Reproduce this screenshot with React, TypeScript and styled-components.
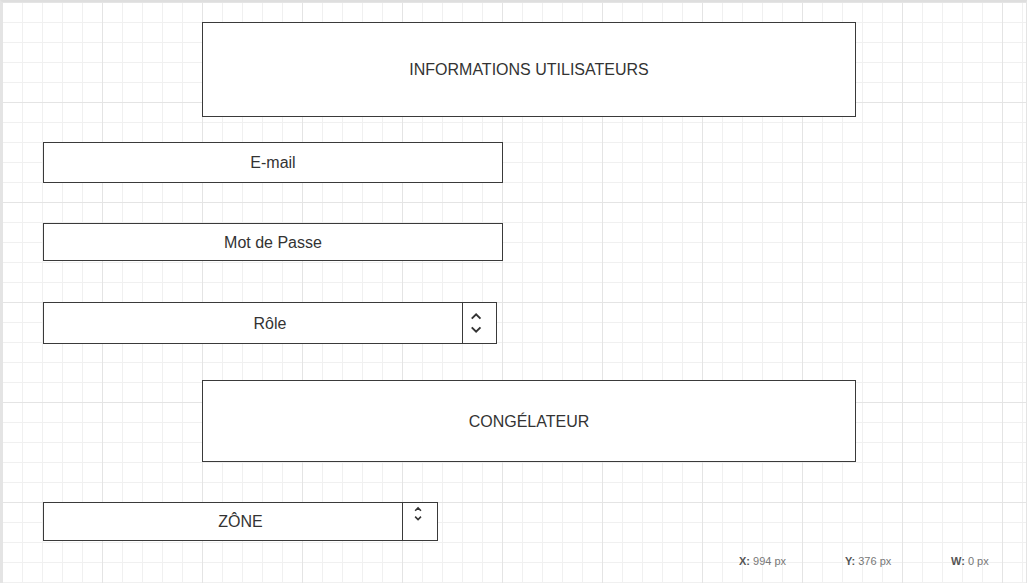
import React from "react";
import styled, { createGlobalStyle } from "styled-components";

const Global = createGlobalStyle`
  html, body { margin: 0; padding: 0; background: #fff; }
  body { font-family: "Liberation Sans", Arial, sans-serif; }
`;

const Canvas = styled.div`
  box-sizing: border-box;
  width: 1027px;
  height: 583px;
  overflow: hidden;
  border-top: 2px solid #dedede;
  border-left: 2px solid #e4e4e4;
  border-right: 1px solid #e4e4e4;
  background-color: #fff;
  background-origin: border-box;
  background-image:
    linear-gradient(to right, #e4e4e4 1px, transparent 1px),
    linear-gradient(to bottom, #e4e4e4 1px, transparent 1px),
    linear-gradient(to right, #f0f0f0 1px, transparent 1px),
    linear-gradient(to bottom, #f0f0f0 1px, transparent 1px);
  background-size: 100px 100px, 100px 100px, 20px 20px, 20px 20px;
  background-position: 2px 2px, 2px 2px, 2px 2px, 2px 2px;
  display: flex;
  flex-direction: column;
  align-items: flex-start;
  padding-top: 20px;
`;

const Box = styled.div<{ $left: number; $w: number; $h: number; $mt: number }>`
  position: relative;
  box-sizing: border-box;
  margin-left: ${(p) => p.$left - 2}px;
  margin-top: ${(p) => p.$mt}px;
  width: ${(p) => p.$w}px;
  height: ${(p) => p.$h}px;
  border: 1px solid #3a3a3a;
  background: #fff;
  display: flex;
  align-items: center;
  justify-content: center;
  font-size: 16px;
  color: #333;
  padding-top: 1px;
`;

const Spinner = styled.div<{ $w: number }>`
  position: absolute;
  top: -1px;
  right: -1px;
  bottom: -1px;
  width: ${(p) => p.$w}px;
  box-sizing: border-box;
  border: 1px solid #3a3a3a;
  display: flex;
  justify-content: center;
`;

const Footer = styled.div`
  display: flex;
  margin-left: 737px;
  margin-top: 14px;
  font-size: 11px;
  color: #777;
`;

const Stat = styled.div`
  width: 106px;
  white-space: nowrap;
  b { color: #555; }
`;

const RoleChevrons = () => (
  <svg width="34" height="40" viewBox="0 0 34 40">
    <path d="M9 15.5 L13.5 11 L18 15.5" fill="none" stroke="#333" strokeWidth="2" />
    <path d="M9 24.5 L13.5 29 L18 24.5" fill="none" stroke="#333" strokeWidth="2" />
  </svg>
);

const ZoneChevrons = () => (
  <svg width="35" height="37" viewBox="0 0 35 37">
    <path d="M12.5 7.5 L15.5 4.5 L18.5 7.5" fill="none" stroke="#333" strokeWidth="1.6" />
    <path d="M12.5 13.5 L15.5 16.5 L18.5 13.5" fill="none" stroke="#333" strokeWidth="1.6" />
  </svg>
);

export default function App() {
  return (
    <>
      <Global />
      <Canvas>
        <Box $left={202} $w={654} $h={95} $mt={0}>INFORMATIONS UTILISATEURS</Box>
        <Box $left={43} $w={460} $h={41} $mt={25}>E-mail</Box>
        <Box $left={43} $w={460} $h={38} $mt={40}>Mot de Passe</Box>
        <Box $left={43} $w={454} $h={42} $mt={41}>
          Rôle
          <Spinner $w={35}>
            <RoleChevrons />
          </Spinner>
        </Box>
        <Box $left={202} $w={654} $h={82} $mt={36}>CONGÉLATEUR</Box>
        <Box $left={43} $w={395} $h={39} $mt={40}>
          ZÔNE
          <Spinner $w={36}>
            <ZoneChevrons />
          </Spinner>
        </Box>
        <Footer>
          <Stat><b>X:</b> 994 px</Stat>
          <Stat><b>Y:</b> 376 px</Stat>
          <Stat><b>W:</b> 0 px</Stat>
        </Footer>
      </Canvas>
    </>
  );
}
